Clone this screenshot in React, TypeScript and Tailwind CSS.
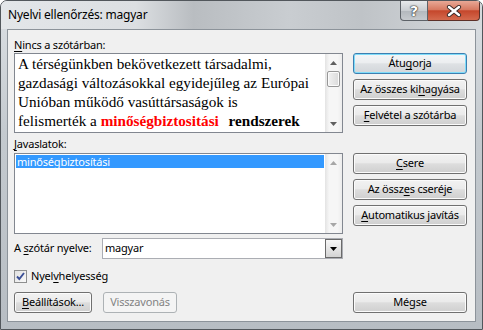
import React from "react";

type Kids = { children?: React.ReactNode };

function U({ children }: Kids) {
  return <span className="underline decoration-[1px] underline-offset-[2px]">{children}</span>;
}

function Btn({
  children,
  primary,
  disabled,
  width = "w-[114px]",
}: Kids & { primary?: boolean; disabled?: boolean; width?: string }) {
  let look =
    "border-[#707070] text-black bg-[linear-gradient(#f2f2f2,#ebebeb_45%,#dddddd_52%,#cfcfcf)] shadow-[inset_0_0_0_1px_#fbfbfb]";
  if (primary)
    look =
      "border-[#3c7fb1] text-black bg-[linear-gradient(#f4f6f8,#eceef0_45%,#dee1e4_52%,#d2d6da)] shadow-[inset_0_0_0_1px_#7fdcf9]";
  if (disabled) look = "border-[#adb2b5] text-[#838383] bg-[#f4f4f4]";
  return (
    <div className={`${width} h-[21px] shrink-0 rounded-[3px] border flex items-center justify-center ${look}`}>
      {children}
    </div>
  );
}

function Arrow({ down, color }: { down?: boolean; color: string }) {
  return (
    <svg width="7" height="4" viewBox="0 0 7 4">
      <path d={down ? "M0 0H7L3.5 4Z" : "M3.5 0L7 4H0Z"} fill={color} />
    </svg>
  );
}

function ScrollBar({ thumb, dim }: { thumb?: boolean; dim?: boolean }) {
  const c = dim ? "#a7a7a7" : "#606060";
  return (
    <div className="w-[17px] h-full shrink-0 flex flex-col bg-[linear-gradient(90deg,#e3e3e3,#f6f6f6_25%,#f6f6f6_75%,#ececec)]">
      <div className="h-[17px] flex items-center justify-center">
        <Arrow color={c} />
      </div>
      <div className="flex-1 px-[2px]">
        {thumb && (
          <div className="h-[16px] rounded-[2px] border border-[#979797] bg-[linear-gradient(90deg,#f2f2f2,#e6e6e6_50%,#dadada)] shadow-[inset_0_0_0_1px_#fbfbfb]" />
        )}
      </div>
      <div className="h-[17px] flex items-center justify-center">
        <Arrow down color={c} />
      </div>
    </div>
  );
}

export default function App() {
  return (
    <div className="w-[483px] h-[330px] overflow-hidden flex flex-col rounded-t-[7px] border border-[#52575c] bg-[linear-gradient(#dce0e4,#c4cacf_40%,#b7bdc3)] font-['Noto_Sans',sans-serif] text-[11px] tracking-[-0.2px] text-black">
      {/* TITLE BAR */}
      <div className="h-[28px] shrink-0 flex items-start bg-[linear-gradient(90deg,#e3e6e9_0%,#dcdfe2_28%,#b9bdc1_40%,#c9cdd1_60%,#bfc3c7_75%,#d6dadd_100%)]">
        <div className="pl-[7px] pt-[6px] text-[12px] leading-[16px] text-black">
          Nyelvi ellenőrzés: magyar
        </div>
        <div className="ml-auto mr-[2px] flex">
          <div className="w-[28px] h-[20px] rounded-bl-[4px] border border-t-0 border-[#5d6268] bg-[linear-gradient(#e7e9eb,#c9cdd1_50%,#b3b8bd_52%,#c6cace)] flex items-center justify-center">
            <span className="text-white font-bold text-[14px] leading-none font-['DejaVu_Sans',sans-serif] [text-shadow:0_0_1px_#222,0_0_1px_#222,0_0_2px_#444]">
              ?
            </span>
          </div>
          <div className="w-[52px] h-[20px] rounded-br-[4px] border border-l-0 border-t-0 border-[#5c3028] bg-[linear-gradient(#e8a896,#d77a62_45%,#c5472c_52%,#d46a4e)] flex items-center justify-center">
            <svg width="16" height="12" viewBox="0 0 16 12">
              <path d="M3 2L13 10M13 2L3 10" stroke="#3a2a28" strokeWidth="4.2" strokeLinecap="round" />
              <path d="M3 2L13 10M13 2L3 10" stroke="#ffffff" strokeWidth="2.4" strokeLinecap="round" />
            </svg>
          </div>
        </div>
      </div>

      {/* CLIENT AREA */}
      <div className="mx-[6px] h-[293px] shrink-0 border border-[#8c939a] bg-[#f0f0f0] pl-[6px] pt-[7px] flex flex-col">
        {/* NOT IN DICTIONARY */}
        <div className="flex gap-[10px]">
          <div className="w-[329px] flex flex-col">
            <div className="h-[16px] leading-[16px]">
              <U>N</U>incs a szótárban:
            </div>
            <div className="h-[80px] border border-[#828790] bg-white flex">
              <div className="flex-1 pl-[3px] font-['Liberation_Serif',serif] text-[15.2px] leading-[19px] tracking-normal whitespace-nowrap overflow-hidden">
                <div>A térségünkben bekövetkezett társadalmi,</div>
                <div>gazdasági változásokkal egyidejűleg az Európai</div>
                <div>Unióban működő vasúttársaságok is</div>
                <div>
                  felismerték a <b className="text-[#ff0000]">minőségbiztositási</b>
                  <span className="inline-block w-[6px]" /> <b>rendszerek</b>
                </div>
              </div>
              <ScrollBar thumb />
            </div>
          </div>
          <div className="mt-[16px] flex flex-col gap-[5px]">
            <Btn primary>
              Átu<U>g</U>orja
            </Btn>
            <Btn>
              Az összes ki<U>h</U>agyása
            </Btn>
            <Btn>
              <U>F</U>elvétel a szótárba
            </Btn>
          </div>
        </div>

        {/* SUGGESTIONS */}
        <div className="mt-[3px] flex gap-[10px]">
          <div className="w-[329px] flex flex-col">
            <div className="h-[16px] leading-[16px] mb-[1px]">
              <U>J</U>avaslatok:
            </div>
            <div className="h-[81px] border border-[#828790] bg-white flex">
              <div className="flex-1 p-[1px]">
                <div className="h-[13px] bg-[#3399ff] text-white leading-[13px] pl-[1px]">
                  minőségbiztosítási
                </div>
              </div>
              <ScrollBar dim />
            </div>
          </div>
          <div className="mt-[17px] flex flex-col gap-[5px]">
            <Btn>
              <U>C</U>sere
            </Btn>
            <Btn>
              Az össz<U>e</U>s cseréje
            </Btn>
            <Btn>
              <U>A</U>utomatikus javítás
            </Btn>
          </div>
        </div>

        {/* LANGUAGE */}
        <div className="mt-[4px] w-[329px] h-[21px] flex items-center justify-between">
          <div>
            A <U>s</U>zótár nyelve:
          </div>
          <div className="w-[241px] h-full border border-[#abadb3] bg-white flex items-center">
            <div className="flex-1 pl-[2px]">magyar</div>
            <div className="w-[17px] h-full border border-[#6a6a6a] bg-[linear-gradient(#f6f6f6,#e6e6e6_50%,#d3d3d3)] flex items-center justify-center">
              <svg width="7" height="4" viewBox="0 0 7 4">
                <path d="M0 0H7L3.5 4Z" fill="#000" />
              </svg>
            </div>
          </div>
        </div>

        {/* GRAMMAR */}
        <div className="mt-[11px] h-[13px] flex items-center gap-[4px]">
          <div className="w-[13px] h-[13px] border border-[#8e8f8f] bg-[linear-gradient(135deg,#e1e1e1,#f9f9f9)] flex items-center justify-center">
            <svg width="11" height="11" viewBox="0 0 11 11">
              <path d="M2 5.5L4.3 8L9 2" fill="none" stroke="#3a4f96" strokeWidth="1.9" />
            </svg>
          </div>
          <div>
            Nyel<U>v</U>helyesség
          </div>
        </div>

        {/* BOTTOM BUTTONS */}
        <div className="mt-[9px] flex">
          <Btn width="w-[78px]">
            <U>B</U>eállítások...
          </Btn>
          <div className="ml-[11px]">
            <Btn disabled width="w-[74px]">
              Visszavonás
            </Btn>
          </div>
          <div className="ml-[176px]">
            <Btn>Mégse</Btn>
          </div>
        </div>
      </div>
    </div>
  );
}
